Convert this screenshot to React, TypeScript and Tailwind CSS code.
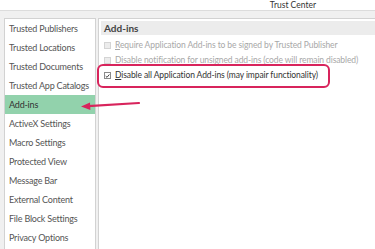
import React from "react";

const navItems = [
  "Trusted Publishers",
  "Trusted Locations",
  "Trusted Documents",
  "Trusted App Catalogs",
  "Add-ins",
  "ActiveX Settings",
  "Macro Settings",
  "Protected View",
  "Message Bar",
  "External Content",
  "File Block Settings",
  "Privacy Options",
];

function Box({ checked, disabled }: { checked?: boolean; disabled?: boolean }) {
  return (
    <span
      className={
        "flex h-[7px] w-[7px] shrink-0 items-center justify-center border " +
        (disabled ? "border-[#d4d4d4] bg-[#ececec]" : "border-[#8a8a8a] bg-white")
      }
    >
      {checked && (
        <svg width="6" height="6" viewBox="0 0 6 6">
          <path d="M0.8 3.1 L2.4 4.6 L5.2 1.2" stroke="#333" strokeWidth="1.1" fill="none" />
        </svg>
      )}
    </span>
  );
}

export default function App() {
  return (
    <div
      className="relative h-[249px] w-[375px] overflow-hidden bg-[#f0f0f0] text-[#444]"
      style={{ fontFamily: "Lato, 'Open Sans', sans-serif" }}
    >
      {/* title bar */}
      <div className="flex h-[11px] items-center justify-end border-b border-[#dcdcdc] bg-white pr-[59px]">
        <span className="whitespace-nowrap text-[8.5px] leading-none text-[#333]">Trust Center</span>
      </div>

      <div className="flex h-[238px] pt-[7px] pl-[4px]">
        {/* left nav */}
        <ul className="w-[92px] shrink-0 border border-b-0 border-[#d2d2d2] bg-white">
          {navItems.map((item) => (
            <li
              key={item}
              className={
                "flex h-[19px] items-center whitespace-nowrap pl-[4px] text-[9px] tracking-[-0.2px] " +
                (item === "Add-ins" ? "bg-[#92d2ac] text-[#333]" : "text-[#555]")
              }
            >
              {item}
            </li>
          ))}
        </ul>

        {/* right pane */}
        <div className="ml-[2px] min-w-0 flex-1 border-l border-t border-[#d2d2d2] bg-white pt-[2px] pl-[2px]">
          <div className="flex h-[14px] items-center bg-[#ececec] pl-[3px] text-[10px] font-bold text-[#444]">
            Add-ins
          </div>
          <div className="flex flex-col whitespace-nowrap pt-[3px] pl-[3px] text-[8.5px] tracking-[-0.1px]">
            <div className="flex h-[15px] items-center gap-[4px] text-[#a8a8a8]">
              <Box disabled />
              <span>
                <span className="underline">R</span>equire Application Add-ins to be signed by Trusted Publisher
              </span>
            </div>
            <div className="flex h-[15px] items-center gap-[4px] text-[#a8a8a8]">
              <Box disabled />
              <span>
                Disa<span className="underline">b</span>le notification for unsigned add-ins (code will remain disabled)
              </span>
            </div>
            <div className="flex h-[15px] items-center gap-[4px] text-[#333]">
              <Box checked />
              <span>
                <span className="underline">D</span>isable all Application Add-ins (may impair functionality)
              </span>
            </div>
          </div>
        </div>
      </div>

      {/* annotation: highlight box */}
      <div className="absolute left-[97px] top-[64px] h-[24px] w-[233px] rounded-[6px] border-2 border-[#d8245c]" />

      {/* annotation: arrow */}
      <svg className="absolute left-[78px] top-[96px]" width="64" height="16" viewBox="0 0 64 16">
        <path d="M61 7 L10 10.2" stroke="#d8245c" strokeWidth="2.2" strokeLinecap="round" />
        <path d="M3 10.6 L12 6.4 L12.4 14 Z" fill="#d8245c" />
      </svg>
    </div>
  );
}
